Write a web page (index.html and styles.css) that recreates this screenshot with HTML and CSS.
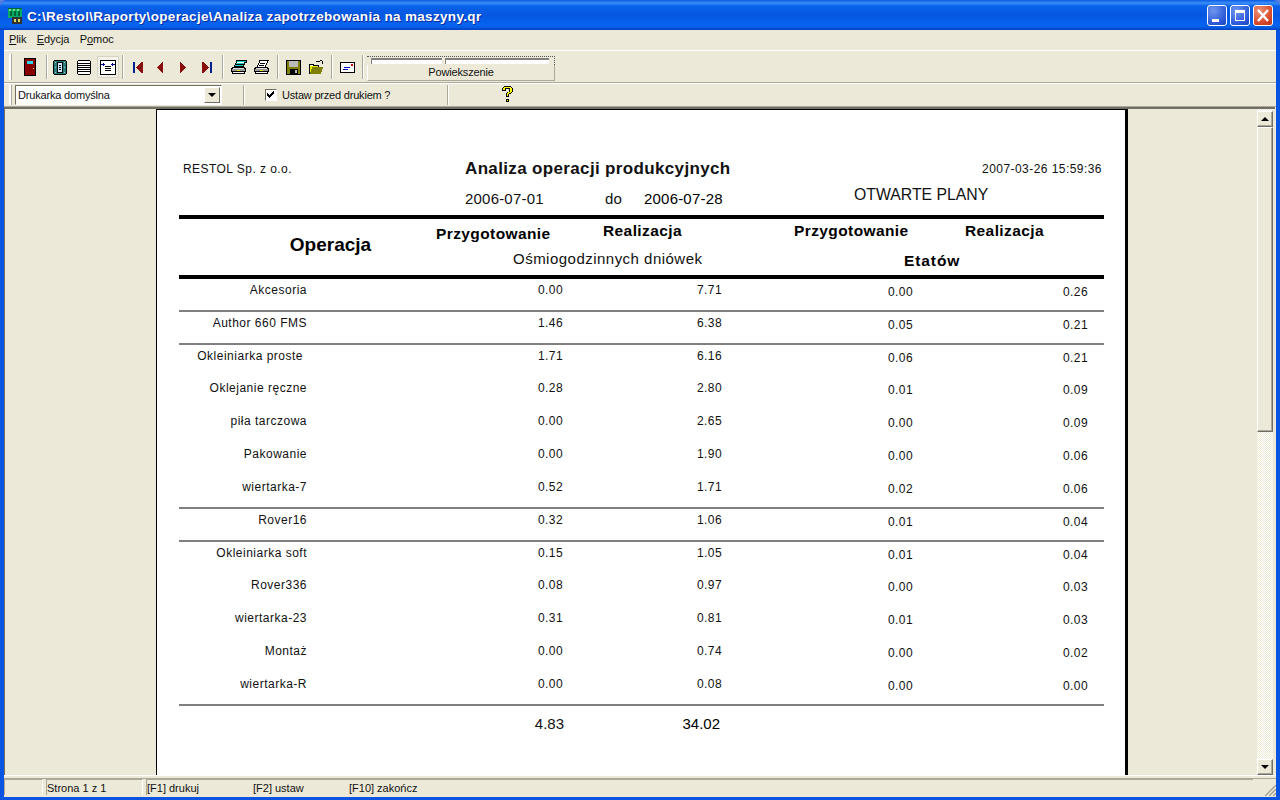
FILE: index.html
```html
<!DOCTYPE html>
<html lang="pl">
<head>
<meta charset="utf-8">
<title>Analiza zapotrzebowania na maszyny</title>
<link rel="stylesheet" href="styles.css">
</head>
<body>
<div class="window">
  <header class="titlebar">
    <svg class="appicon" width="16" height="16" viewBox="0 0 16 16" shape-rendering="crispEdges"><path fill="#0a6" d="M1 0h14v10H1z"/><path fill="#063" d="M1 0h14v1H1zM3 3h2v5H3zM7 3h2v5H7zM11 3h2v5h-2z"/><path fill="#7d8" d="M2 1h2v2H2zM6 1h2v2H6zM10 1h2v2h-2z"/><path fill="#333" d="M5 9h10v7H5z"/><path fill="#dd6" d="M7 11h2v3H7zM11 11h2v3h-2z"/></svg>
    <span class="title-text">C:\Restol\Raporty\operacje\Analiza zapotrzebowania na maszyny.qr</span>
    <div class="capbtns">
      <span class="capbtn"><svg width="20" height="21" viewBox="0 0 20 21" shape-rendering="crispEdges"><path fill="#fff" d="M5 14h7v3H5z"/></svg></span>
      <span class="capbtn"><svg width="20" height="21" viewBox="0 0 20 21" shape-rendering="crispEdges"><path fill="none" stroke="#fff" d="M5.5 5.5h9v10h-9z"/><path fill="#fff" d="M5 5h10v3H5z"/></svg></span>
      <span class="capbtn capbtn-close"><svg width="20" height="21" viewBox="0 0 20 21"><path stroke="#fff" stroke-width="2.4" d="M5 5l10 11M15 5L5 16"/></svg></span>
    </div>
  </header>

  <div class="inner">
    <nav class="menubar">
      <span class="menu-item"><u>P</u>lik</span>
      <span class="menu-item"><u>E</u>dycja</span>
      <span class="menu-item">P<u>o</u>moc</span>
    </nav>

    <div class="toolbar tb-main">
      <span class="grip"></span>
      <span class="tool tool-door"><svg width="12" height="18" viewBox="1 0 12 18" shape-rendering="crispEdges"><path fill="#000" d="M1 0h12v18H1z"/><path fill="#800" d="M2 1h10v16H2z"/><path fill="#29d6ee" d="M4 3h6v3H4z"/><path fill="#ee6" d="M10 10h1v1h-1z"/></svg></span>
      <span class="sep sep-a"></span>
      <span class="tool tool-b"><svg width="16" height="15" viewBox="0 0 16 15" shape-rendering="crispEdges"><path fill="#000" d="M2 0h12v1h1v13h-1v1H2v-1H1V1h1z"/><path fill="#2a7a7a" d="M2 1h12v13H2z"/><path fill="#9cc" d="M3 2h1v1H3zM12 2h1v1h-1zM3 12h1v1H3zM12 12h1v1h-1zM3 7h1v1H3zM12 7h1v1h-1z"/><path fill="#000" d="M5 2h6v11H5z"/><path fill="#cfe8ff" d="M6 3h4v9H6z"/><path fill="#000" d="M7 5h2v1H7zM7 7h2v1H7zM7 9h2v1H7z"/></svg></span>
      <span class="tool tool-c"><svg width="16" height="15" viewBox="0 0 16 15" shape-rendering="crispEdges"><path fill="#000" d="M2 0h12v1h1v13h-1v1H2v-1H1V1h1z"/><path fill="#fff" d="M2 1h12v13H2z"/><path fill="#000" d="M2 3h12v1H2zM2 5h12v1H2zM2 7h12v1H2zM2 9h12v1H2zM2 11h12v1H2z"/></svg></span>
      <span class="tool tool-d"><svg width="16" height="15" viewBox="0 0 16 15" shape-rendering="crispEdges"><path fill="#000" d="M0 0h16v15H0z"/><path fill="#fff" d="M1 1h14v13H1z"/><path fill="#000" d="M5 6h6v1H5zM5 8h6v1H5zM5 10h6v1H5z"/><path fill="#00a" d="M1 4h4v1H1zM11 4h4v1h-4zM3 3h1v3H3zM12 3h1v3h-1z"/></svg></span>
      <span class="sep sep-b"></span>
      <span class="tool tool-first"><svg width="10" height="11" viewBox="0 0 10 11" shape-rendering="crispEdges"><path fill="#00208a" d="M0 0h2v11H0z"/><path fill="#8a0f0f" d="M8 0h2v11H8zM7 1h1v9H7zM6 2h1v7H6zM5 3h1v5H5zM4 4h1v3H4zM3 5h1v1H3z"/></svg></span>
      <span class="tool tool-prev"><svg width="6" height="11" viewBox="0 0 6 11" shape-rendering="crispEdges"><path fill="#8a0f0f" d="M5 0h1v11H5zM4 1h1v9H4zM3 2h1v7H3zM2 3h1v5H2zM1 4h1v3H1zM0 5h1v1H0z"/></svg></span>
      <span class="tool tool-next"><svg width="6" height="11" viewBox="0 0 6 11" shape-rendering="crispEdges"><path fill="#8a0f0f" d="M0 0h1v11H0zM1 1h1v9H1zM2 2h1v7H2zM3 3h1v5H3zM4 4h1v3H4zM5 5h1v1H5z"/></svg></span>
      <span class="tool tool-last"><svg width="10" height="11" viewBox="0 0 10 11" shape-rendering="crispEdges"><path fill="#00208a" d="M8 0h2v11H8z"/><path fill="#8a0f0f" d="M0 0h2v11H0zM2 1h1v9H2zM3 2h1v7H3zM4 3h1v5H4zM5 4h1v3H5zM6 5h1v1H6z"/></svg></span>
      <span class="sep sep-c"></span>
      <span class="tool tool-pr1"><svg width="17" height="15" viewBox="0 0 17 15" shape-rendering="crispEdges"><path fill="#000" d="M6 0h11v3h-2v2h-1v2h1v1h1v4h-1v2H2v-2H1V8h1V7h2V5h1V3h1z"/><path fill="#2cc" d="M7 1h9v1h-2v2H6V3h1zM5 5h8v1H5z"/><path fill="#fff" d="M7 2h7v1H7z"/><path fill="#ddd" d="M3 8h11v1H3z"/><path fill="#999" d="M2 9h13v2H2z"/><path fill="#ee0" d="M7 10h3v1H7z"/><path fill="#fff" d="M3 12h11v1H3z"/></svg></span>
      <span class="tool tool-pr2"><svg width="17" height="15" viewBox="0 0 17 15" shape-rendering="crispEdges"><path fill="#000" d="M6 0h10v1h-1v2h-1v2h-1v2h2v1h1v4h-1v2H2v-2H1V8h1V7h2V5h1V3h1z"/><path fill="#fff" d="M7 1h7v2h-1v2h-1v2H5V5h1V3h1z"/><path fill="#000" d="M7 3h5v1H7zM6 5h5v1H6z"/><path fill="#ddd" d="M3 8h11v1H3z"/><path fill="#999" d="M2 9h13v2H2z"/><path fill="#ee0" d="M7 10h3v1H7z"/><path fill="#fff" d="M3 12h11v1H3z"/></svg></span>
      <span class="sep sep-d"></span>
      <span class="tool tool-save"><svg width="15" height="15" viewBox="0 0 15 15" shape-rendering="crispEdges"><path fill="#000" d="M0 0h15v15H0z"/><path fill="#808000" d="M1 1h13v13H1z"/><path fill="#bbb" d="M3 1h9v6H3z"/><path fill="#000" d="M4 9h8v5H4z"/><path fill="#bbb" d="M9 10h2v3H9z"/></svg></span>
      <span class="tool tool-open"><svg width="15" height="14" viewBox="0 0 15 14" shape-rendering="crispEdges"><path fill="#000" d="M0 4h5v1h5v9H0z"/><path fill="#ee0" d="M1 6h8v7H1z"/><path fill="#fff" d="M1 5h3v1H1z"/><path fill="#808000" d="M3 7h11v1l-2 6H1z"/><path fill="#000" d="M7 1h4v1H7zM11 0h1v1h-1zM13 1h1v3h-1zM12 0h1v1h-1z"/></svg></span>
      <span class="sep sep-e"></span>
      <span class="tool tool-mail"><svg width="15" height="11" viewBox="0 0 15 11" shape-rendering="crispEdges"><path fill="#000" d="M0 0h15v11H0z"/><path fill="#fff" d="M1 1h13v9H1z"/><path fill="#c00" d="M11 2h2v2h-2z"/><path fill="#00c" d="M4 5h6v1H4zM3 7h5v1H3z"/></svg></span>
      <span class="sep sep-f"></span>
      <div class="zoom-ctl">
        <div class="zoom-track"><span class="groove groove-l"></span><span class="groove groove-r"></span></div>
        <div class="zoom-btn">Powiekszenie</div>
      </div>
    </div>

    <div class="toolbar tb-print">
      <span class="grip grip-short"></span>
      <div class="combo"><span class="combo-text">Drukarka domyślna</span><span class="combo-arrow"><i class="tri-down"></i></span></div>
      <span class="sep2 sep2-a"></span>
      <span class="check"><svg width="9" height="9" viewBox="0 0 9 9" shape-rendering="crispEdges"><path fill="#000" d="M0 3h1v3H0zM1 4h1v3H1zM2 5h1v3H2zM3 4h1v3H3zM4 3h1v3H4zM5 2h1v3H5zM6 1h1v3H6z"/></svg></span>
      <span class="check-label">Ustaw przed drukiem ?</span>
      <span class="sep2 sep2-b"></span>
      <svg class="help" width="11" height="17" viewBox="0 0 11 17" shape-rendering="crispEdges"><path fill="#000" d="M2 0h7v1h1v1h1v4h-1v1H9v1H7v3H4V7h1V6h2V3H4v2H0V2h1V1h1zM4 13h3v3H4z"/><path fill="#ff0" d="M2 1h7v1h1v4H9v1H7v1H6v2H5V7h1V6h2V2H3v2H1V2h1zM5 14h1v1H5z"/></svg>
    </div>

    <div class="client">
      <main class="viewport">
        <article class="page">
          <div class="rep-top">
            <span class="company">RESTOL Sp. z o.o.</span>
            <h1 class="rep-title">Analiza operacji produkcyjnych</h1>
            <span class="stamp">2007-03-26 15:59:36</span>
          </div>
          <div class="rep-dates">
            <span class="date-from">2006-07-01</span>
            <span class="date-do">do</span>
            <span class="date-to">2006-07-28</span>
            <span class="plans">OTWARTE PLANY</span>
          </div>
          <div class="rep-head">
            <div class="h-op">Operacja</div>
            <div class="h-c h-c1">Przygotowanie</div>
            <div class="h-c h-c2">Realizacja</div>
            <div class="h-c h-c3">Przygotowanie</div>
            <div class="h-c h-c4">Realizacja</div>
            <div class="h-sub1">Ośmiogodzinnych dniówek</div>
            <div class="h-sub2">Etatów</div>
          </div>
          <div class="rows">
            <div class="row ruled"><span>Akcesoria</span><span>0.00</span><span>7.71</span><span>0.00</span><span>0.26</span></div>
            <div class="row ruled"><span>Author 660 FMS</span><span>1.46</span><span>6.38</span><span>0.05</span><span>0.21</span></div>
            <div class="row"><span class="label-in">Okleiniarka proste</span><span>1.71</span><span>6.16</span><span>0.06</span><span>0.21</span></div>
            <div class="row"><span>Oklejanie ręczne</span><span>0.28</span><span>2.80</span><span>0.01</span><span>0.09</span></div>
            <div class="row"><span>piła tarczowa</span><span>0.00</span><span>2.65</span><span>0.00</span><span>0.09</span></div>
            <div class="row"><span>Pakowanie</span><span>0.00</span><span>1.90</span><span>0.00</span><span>0.06</span></div>
            <div class="row ruled"><span>wiertarka-7</span><span>0.52</span><span>1.71</span><span>0.02</span><span>0.06</span></div>
            <div class="row ruled"><span>Rover16</span><span>0.32</span><span>1.06</span><span>0.01</span><span>0.04</span></div>
            <div class="row"><span>Okleiniarka soft</span><span>0.15</span><span>1.05</span><span>0.01</span><span>0.04</span></div>
            <div class="row"><span>Rover336</span><span>0.08</span><span>0.97</span><span>0.00</span><span>0.03</span></div>
            <div class="row"><span>wiertarka-23</span><span>0.31</span><span>0.81</span><span>0.01</span><span>0.03</span></div>
            <div class="row"><span>Montaż</span><span>0.00</span><span>0.74</span><span>0.00</span><span>0.02</span></div>
            <div class="row ruled"><span>wiertarka-R</span><span>0.00</span><span>0.08</span><span>0.00</span><span>0.00</span></div>
          </div>
          <div class="totals"><span class="tot1">4.83</span><span class="tot2">34.02</span></div>
        </article>
      </main>
      <aside class="scrollbar">
        <span class="sb-btn"><i class="tri-up"></i></span>
        <span class="sb-thumb"></span>
        <span class="sb-track"></span>
        <span class="sb-btn"><i class="tri-down"></i></span>
      </aside>
    </div>

    <footer class="statusbar">
      <span class="st st-1"></span>
      <span class="st st-2">Strona 1 z 1</span>
      <span class="st st-3"><span class="k1">[F1] drukuj</span><span class="k2">[F2] ustaw</span><span>[F10] zakończ</span></span>
      <svg class="resize" width="13" height="13" viewBox="0 0 13 13"><path stroke="#fff" d="M13 1L1 13M13 5L5 13M13 9L9 13"/><path stroke="#a09d88" stroke-width="1.4" d="M13 2L2 13M13 6L6 13M13 10L10 13"/></svg>
    </footer>
  </div>
</div>
</body>
</html>
```
FILE: styles.css
```css
* { box-sizing: border-box; }
html, body { margin: 0; height: 100%; overflow: hidden; background: #5a7edc; }
u { text-decoration: underline; }
i { display: block; }

.window {
  width: 1280px; height: 800px; display: flex; flex-direction: column;
  background: #0a54e3; border-radius: 8px 8px 0 0; overflow: hidden;
  font: 11px "Liberation Sans", sans-serif; color: #000;
}

/* Title bar */
.titlebar {
  height: 30px; flex: none; display: flex; align-items: center; padding: 2px 7px 0;
  background: linear-gradient(#0a5ae6 0, #3c8ef8 3px, #0a62ea 6px, #0456e0 15px, #0664f0 24px, #0460e8 27px, #003fc0 30px);
}
.appicon { flex: none; }
.title-text {
  margin-left: 4px; color: #fff; font: bold 13.5px "Liberation Sans", sans-serif; letter-spacing: .33px;
  text-shadow: 1px 1px 0 #0a2a9c; white-space: nowrap;
}
.capbtns { margin-left: auto; display: flex; gap: 3px; margin-top: -1px; }
.capbtn {
  width: 20px; height: 21px; display: block; border: 1px solid #fff; border-radius: 3px;
  background: radial-gradient(circle at 30% 25%, #6f97ee, #2a57d8 70%, #1c42b8);
  overflow: hidden;
}
.capbtn svg { display: block; margin: -1px; }
.capbtn-close { background: radial-gradient(circle at 30% 25%, #eb9278, #d8492a 65%, #b8331a); }

/* Inner frame */
.inner {
  flex: 1; min-height: 0; margin: 0 4px 3px; background: #ece9d8;
  display: flex; flex-direction: column;
}
.menubar {
  height: 20px; flex: none; display: flex; align-items: center; padding: 0 0 2px 5px; gap: 10.5px;
  font-size: 11px; letter-spacing: -.1px; color: #111;
}
.toolbar {
  position: relative; flex: none; display: flex; align-items: center;
  border-top: 1px solid #fff; box-shadow: inset 0 -1px 0 #aca899;
}
.tb-main { height: 33px; }
.tb-print { height: 24px; padding-bottom: 2px; }

.grip { height: 26px; margin-left: 5px; flex: none; background: #fff; border-right: 1px solid #aca899; width: 3px; }
.grip-short { height: 20px; }
.tool { display: flex; flex: none; align-items: center; justify-content: center; }
.sep { width: 2px; height: 24px; flex: none; background: #aca899; border-right: 1px solid #fff; }
.tool-door { margin-left: 12px; width: 12px; }
.sep-a { margin-left: 10px; }
.tool-b { margin-left: 4px; width: 16px; }
.tool-c { margin-left: 8px; width: 16px; }
.tool-d {
  margin-left: 5px; width: 22px; height: 22px;
  background: repeating-conic-gradient(#fff 0 25%, #ece9d8 0 50%) 0 0 / 2px 2px;
  border: 1px solid #d8d4c4;
}
.sep-b { margin-left: 3px; }
.tool-first { margin-left: 9px; width: 10px; }
.tool-prev { margin-left: 14px; width: 6px; }
.tool-next { margin-left: 17px; width: 6px; }
.tool-last { margin-left: 16px; width: 10px; }
.sep-c { margin-left: 10px; }
.tool-pr1 { margin-left: 6px; width: 17px; }
.tool-pr2 { margin-left: 6px; width: 17px; }
.sep-d { margin-left: 7px; }
.tool-save { margin-left: 7px; width: 15px; }
.tool-open { margin-left: 8px; width: 15px; }
.sep-e { margin-left: 7px; }
.tool-mail { margin-left: 7px; width: 15px; }
.sep-f { margin-left: 7px; }

.zoom-ctl { margin-left: 3px; width: 188px; height: 23px; flex: none; display: flex; flex-direction: column; border-top: 1px dotted #555; border-right: 1px dotted #555; }
.zoom-track { height: 8px; display: flex; gap: 3px; padding: 1px 5px 0 4px; flex: none; }
.groove { display: block; height: 6px; border-top: 2px solid #808080; background: #fff; border-left: 1px solid #808080; }
.groove-l { width: 71px; }
.groove-r { flex: 1; }
.zoom-btn {
  flex: 1; text-align: center; line-height: 15px; font-size: 11px; letter-spacing: -.15px; color: #111;
  border-right: 1px solid #aca899; border-bottom: 1px solid #aca899; background: #ece9d8;
  border-left: 1px solid #fff; margin-right: -1px;
}

.combo {
  margin-left: 3px; width: 207px; height: 20px; flex: none; display: flex; align-items: center;
  background: #fff; border: 1px solid; border-color: #716f64 #fff #fff #716f64;
}
.combo-text { flex: 1; padding-left: 2px; font-size: 11px; letter-spacing: -.18px; color: #111; }
.combo-arrow {
  width: 16px; height: 16px; margin-right: 1px; display: flex; align-items: center; justify-content: center;
  background: #ece9d8; border: 1px solid; border-color: #fff #716f64 #716f64 #fff;
}
.tri-down { width: 0; height: 0; border: 4px solid transparent; border-top: 4px solid #000; border-bottom: 0; }
.tri-up { width: 0; height: 0; border: 4px solid transparent; border-bottom: 4px solid #000; border-top: 0; }
.sep2 { width: 2px; height: 20px; flex: none; background: #aca899; border-right: 1px solid #fff; }
.sep2-a { margin-left: 21px; }
.check {
  margin-left: 20px; width: 12px; height: 12px; flex: none; display: flex; align-items: center; justify-content: center;
  background: #fff; border: 1px solid; border-color: #716f64 #fff #fff #716f64;
}
.check svg { display: block; }
.check-label { margin-left: 5px; width: 165px; flex: none; font-size: 11px; letter-spacing: -.2px; color: #111; }
.sep2-b { margin-left: 0; }
.help { margin-left: 53px; flex: none; }

/* Client */
.client {
  flex: 1; min-height: 0; margin: 0 1px 0 0; display: flex; padding-right: 2px;
  border-top: 2px solid #716f64; border-left: 1px solid #716f64;
}
.viewport { flex: 1; min-width: 0; overflow: hidden; display: flex; justify-content: flex-start; padding-left: 151px; }
.page {
  width: 972px; height: 700px; flex: none; background: #fff; color: #111;
  border-left: 1px solid #000; border-right: 3px solid #000; border-top: 1px solid #000;
  padding: 0 0 0 22px; font-family: "Liberation Sans", sans-serif;
}
.scrollbar {
  width: 16px; flex: none; display: flex; flex-direction: column;
  background: repeating-conic-gradient(#fff 0 25%, #ece9d8 0 50%) 0 0 / 2px 2px;
  padding-top: 2px;
}
.sb-btn, .sb-thumb {
  display: flex; align-items: center; justify-content: center; flex: none; background: #ece9d8;
  border: 1px solid; border-color: #fff #716f64 #716f64 #fff;
  box-shadow: inset -1px -1px 0 #aca899;
}
.sb-btn { height: 16px; }
.sb-thumb { height: 305px; }
.sb-track { flex: 1; }

/* Report */
.rep-top { display: flex; align-items: center; height: 24px; margin-top: 47px; }
.company { width: 286px; padding-left: 4px; font-size: 12px; letter-spacing: .45px; flex: none; }
.rep-title { margin: 0; width: 400px; font-size: 17px; letter-spacing: .35px; font-weight: bold; flex: none; white-space: nowrap; }
.stamp { width: 237px; text-align: right; font-size: 12px; letter-spacing: .45px; flex: none; }
.rep-dates { display: flex; align-items: center; height: 34px; font-size: 15px; letter-spacing: .2px; }
.date-from { margin-left: 286px; width: 140px; flex: none; }
.date-do { width: 39px; flex: none; }
.date-to { width: 210px; flex: none; color: #000; }
.plans { position: relative; top: -3px; font-size: 15.8px; letter-spacing: 0; }

.rep-head {
  width: 925px; height: 64px; display: grid;
  border-top: 4px solid #000; border-bottom: 4px solid #000;
  grid-template-columns: 257px 167px 191px 171px 1fr;
  grid-template-rows: 29px 27px;
}
.h-op { grid-row: 1 / 3; grid-column: 1; text-align: center; padding-left: 46px; padding-top: 15px; font-size: 19px; font-weight: bold; color: #000; }
.h-c { font-size: 15.5px; font-weight: bold; letter-spacing: .4px; line-height: 17px; padding-top: 6px; color: #000; }
.h-c2, .h-c3, .h-c4 { padding-top: 3px; }
.h-sub1 { grid-row: 2; grid-column: 2 / 4; padding-left: 77px; font-size: 15px; letter-spacing: .48px; line-height: 17px; padding-top: 2px; }
.h-sub2 { grid-row: 2; grid-column: 4 / 6; padding-left: 110px; font-size: 15.5px; font-weight: bold; line-height: 17px; padding-top: 4px; letter-spacing: .9px; color: #000; }

.rows { width: 925px; }
.row {
  display: grid; height: 32.83px; font-size: 12px; letter-spacing: .4px;
  grid-template-columns: 128px 256px 159px 191px 175px 16px;
  padding-top: 4px;
}
.row span { text-align: right; white-space: nowrap; }
.row span:first-child { letter-spacing: .5px; }
.row .label-in { padding-right: 4px; letter-spacing: .35px; }
.row span:nth-child(n+4) { padding-top: 2px; }
.ruled { border-bottom: 2px solid #808080; }

.totals {
  width: 925px; display: grid; grid-template-columns: 385px 158px; padding-top: 9px;
  font-size: 15px;
}
.totals span { text-align: right; }
.tot2 { color: #000; padding-right: 2px; }

/* Status bar */
.statusbar {
  position: relative; height: 22px; flex: none; display: flex; align-items: flex-end; padding: 3px 0 2px 0;
  background: #ece9d8; border-top: 1px solid #fff; font-size: 11px; color: #111;
}
.statusbar::before { content: ""; position: absolute; left: 0; right: 0; top: 2px; height: 1px; background: #aca899; }
.st { height: 16px; line-height: 16px; display: flex; border-left: 1px solid #aca899; border-top: 1px solid #aca899; border-right: 1px solid #fff; flex: none; }
.st-1 { width: 39px; }
.st-2 { width: 97px; margin-left: 3px; }
.st-3 { width: 1107px; margin-left: 3px; border-right: 0; }
.k1 { width: 106px; flex: none; }
.k2 { width: 96px; flex: none; }
.resize { position: absolute; right: 0; bottom: 1px; }
```
